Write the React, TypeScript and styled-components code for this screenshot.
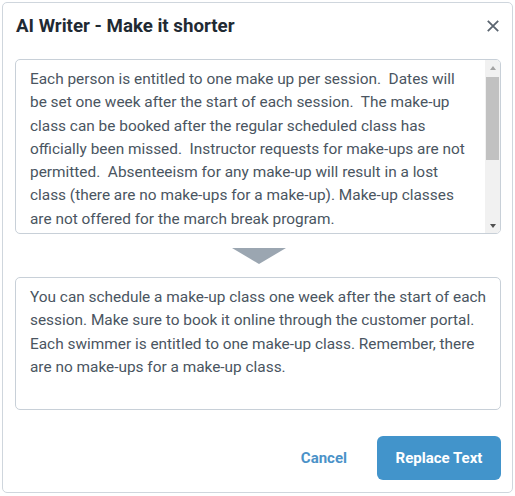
import React from "react";
import styled, { createGlobalStyle } from "styled-components";

const Global = createGlobalStyle`
  html, body { margin: 0; padding: 0; background: #ffffff; }
  body { font-family: Roboto, "Noto Sans", Arial, sans-serif; }
  * { box-sizing: border-box; }
`;

const Page = styled.div`
  padding: 2px;
  width: 515px;
  height: 496px;
`;

const Dialog = styled.div`
  width: 511px;
  height: 491px;
  border: 1px solid #cfd6dd;
  border-radius: 5px;
  background: #fff;
  display: flex;
  flex-direction: column;
  padding: 0 11px 12px 12px;
`;

const Header = styled.div`
  height: 56px;
  display: flex;
  align-items: center;
  justify-content: space-between;
  padding-left: 1px;
  padding-bottom: 11px;
`;

const Title = styled.h2`
  margin: 0;
  font-family: Roboto, Arial, sans-serif;
  font-size: 18.7px;
  font-weight: 700;
  color: #1f2a33;
`;

const CloseButton = styled.button`
  border: 0;
  background: transparent;
  padding: 0;
  width: 16px;
  height: 16px;
  display: flex;
  align-items: center;
  justify-content: center;
  cursor: pointer;
`;

const textStyle = `
  font-family: Roboto, Arial, sans-serif;
  font-size: 15.4px;
  line-height: 23.3px;
  color: #4a5561;
`;

const Field = styled.div<{ $h: number }>`
  width: 486px;
  height: ${(p) => p.$h}px;
  border: 1px solid #c8d0d8;
  border-radius: 5px;
  overflow: hidden;
  display: flex;
  background: #fff;
`;

const TextArea = styled.textarea<{ $padRight: number }>`
  flex: 1;
  min-width: 0;
  height: 100%;
  border: 0;
  padding: 8px ${(p) => p.$padRight}px 8px 14px;
  resize: none;
  overflow: hidden;
  outline: none;
  background: transparent;
  ${textStyle}
`;

const ScrollBar = styled.div`
  width: 15px;
  display: flex;
  flex-direction: column;
  background: #f1f1f1;
`;

const ScrollArrow = styled.div<{ $dir: "up" | "down"; $active?: boolean }>`
  height: 15px;
  display: flex;
  align-items: center;
  justify-content: center;
  &::before {
    content: "";
    width: 0;
    height: 0;
    border-left: 3.5px solid transparent;
    border-right: 3.5px solid transparent;
    ${(p) =>
      p.$dir === "up"
        ? `border-bottom: 4px solid ${p.$active ? "#505050" : "#a3a3a3"};`
        : `border-top: 4px solid ${p.$active ? "#505050" : "#a3a3a3"};`}
  }
`;

const Track = styled.div`
  flex: 1;
  padding-top: 2px;
`;

const Thumb = styled.div<{ $size: number }>`
  height: ${(p) => p.$size}px;
  margin: 0 1px;
  background: #c1c1c1;
`;

const ArrowRow = styled.div`
  height: 43px;
  display: flex;
  align-items: center;
  justify-content: center;
  padding-left: 2px;
`;

const Footer = styled.div`
  margin-top: auto;
  display: flex;
  justify-content: flex-end;
  align-items: center;
  gap: 30px;
`;

const LinkButton = styled.button`
  border: 0;
  background: transparent;
  font-family: Roboto, Arial, sans-serif;
  font-size: 15px;
  font-weight: 700;
  color: #4b92c8;
  padding: 0;
  cursor: pointer;
`;

const PrimaryButton = styled.button`
  width: 124px;
  height: 44px;
  border: 0;
  border-radius: 6px;
  background: #4294cb;
  color: #fff;
  font-family: Roboto, Arial, sans-serif;
  font-size: 15px;
  font-weight: 700;
  cursor: pointer;
`;

const original =
  "Each person is entitled to one make up per session.  Dates will be set one week after the start of each session.  The make-up class can be booked after the regular scheduled class has officially been missed.  Instructor requests for make-ups are not permitted.  Absenteeism for any make-up will result in a lost class (there are no make-ups for a make-up). Make-up classes are not offered for the march break program.\n\nMake-ups must be booked online through the customer portal at least 24 hours in advance. Spaces are limited and are offered on a first come, first served basis.";

const shorter =
  "You can schedule a make-up class one week after the start of each session. Make sure to book it online through the customer portal. Each swimmer is entitled to one make-up class. Remember, there are no make-ups for a make-up class.";

export default function App() {
  return (
    <Page>
      <Global />
      <Dialog>
        <Header>
          <Title>AI Writer - Make it shorter</Title>
          <CloseButton aria-label="Close">
            <svg width="12" height="12" viewBox="0 0 12 12">
              <path d="M0.8 0.8 L11.2 11.2 M11.2 0.8 L0.8 11.2" stroke="#5b6570" strokeWidth="1.8" />
            </svg>
          </CloseButton>
        </Header>
        <Field $h={175}>
          <TextArea $padRight={14} defaultValue={original} readOnly />
          <ScrollBar>
            <ScrollArrow $dir="up" />
            <Track>
              <Thumb $size={83} />
            </Track>
            <ScrollArrow $dir="down" $active />
          </ScrollBar>
        </Field>
        <ArrowRow>
          <svg width="54" height="16" viewBox="0 0 54 16">
            <polygon points="0,0 54,0 27,16" fill="#9ba6b1" />
          </svg>
        </ArrowRow>
        <Field $h={133}>
          <TextArea $padRight={8} defaultValue={shorter} readOnly />
        </Field>
        <Footer>
          <LinkButton>Cancel</LinkButton>
          <PrimaryButton>Replace Text</PrimaryButton>
        </Footer>
      </Dialog>
    </Page>
  );
}
